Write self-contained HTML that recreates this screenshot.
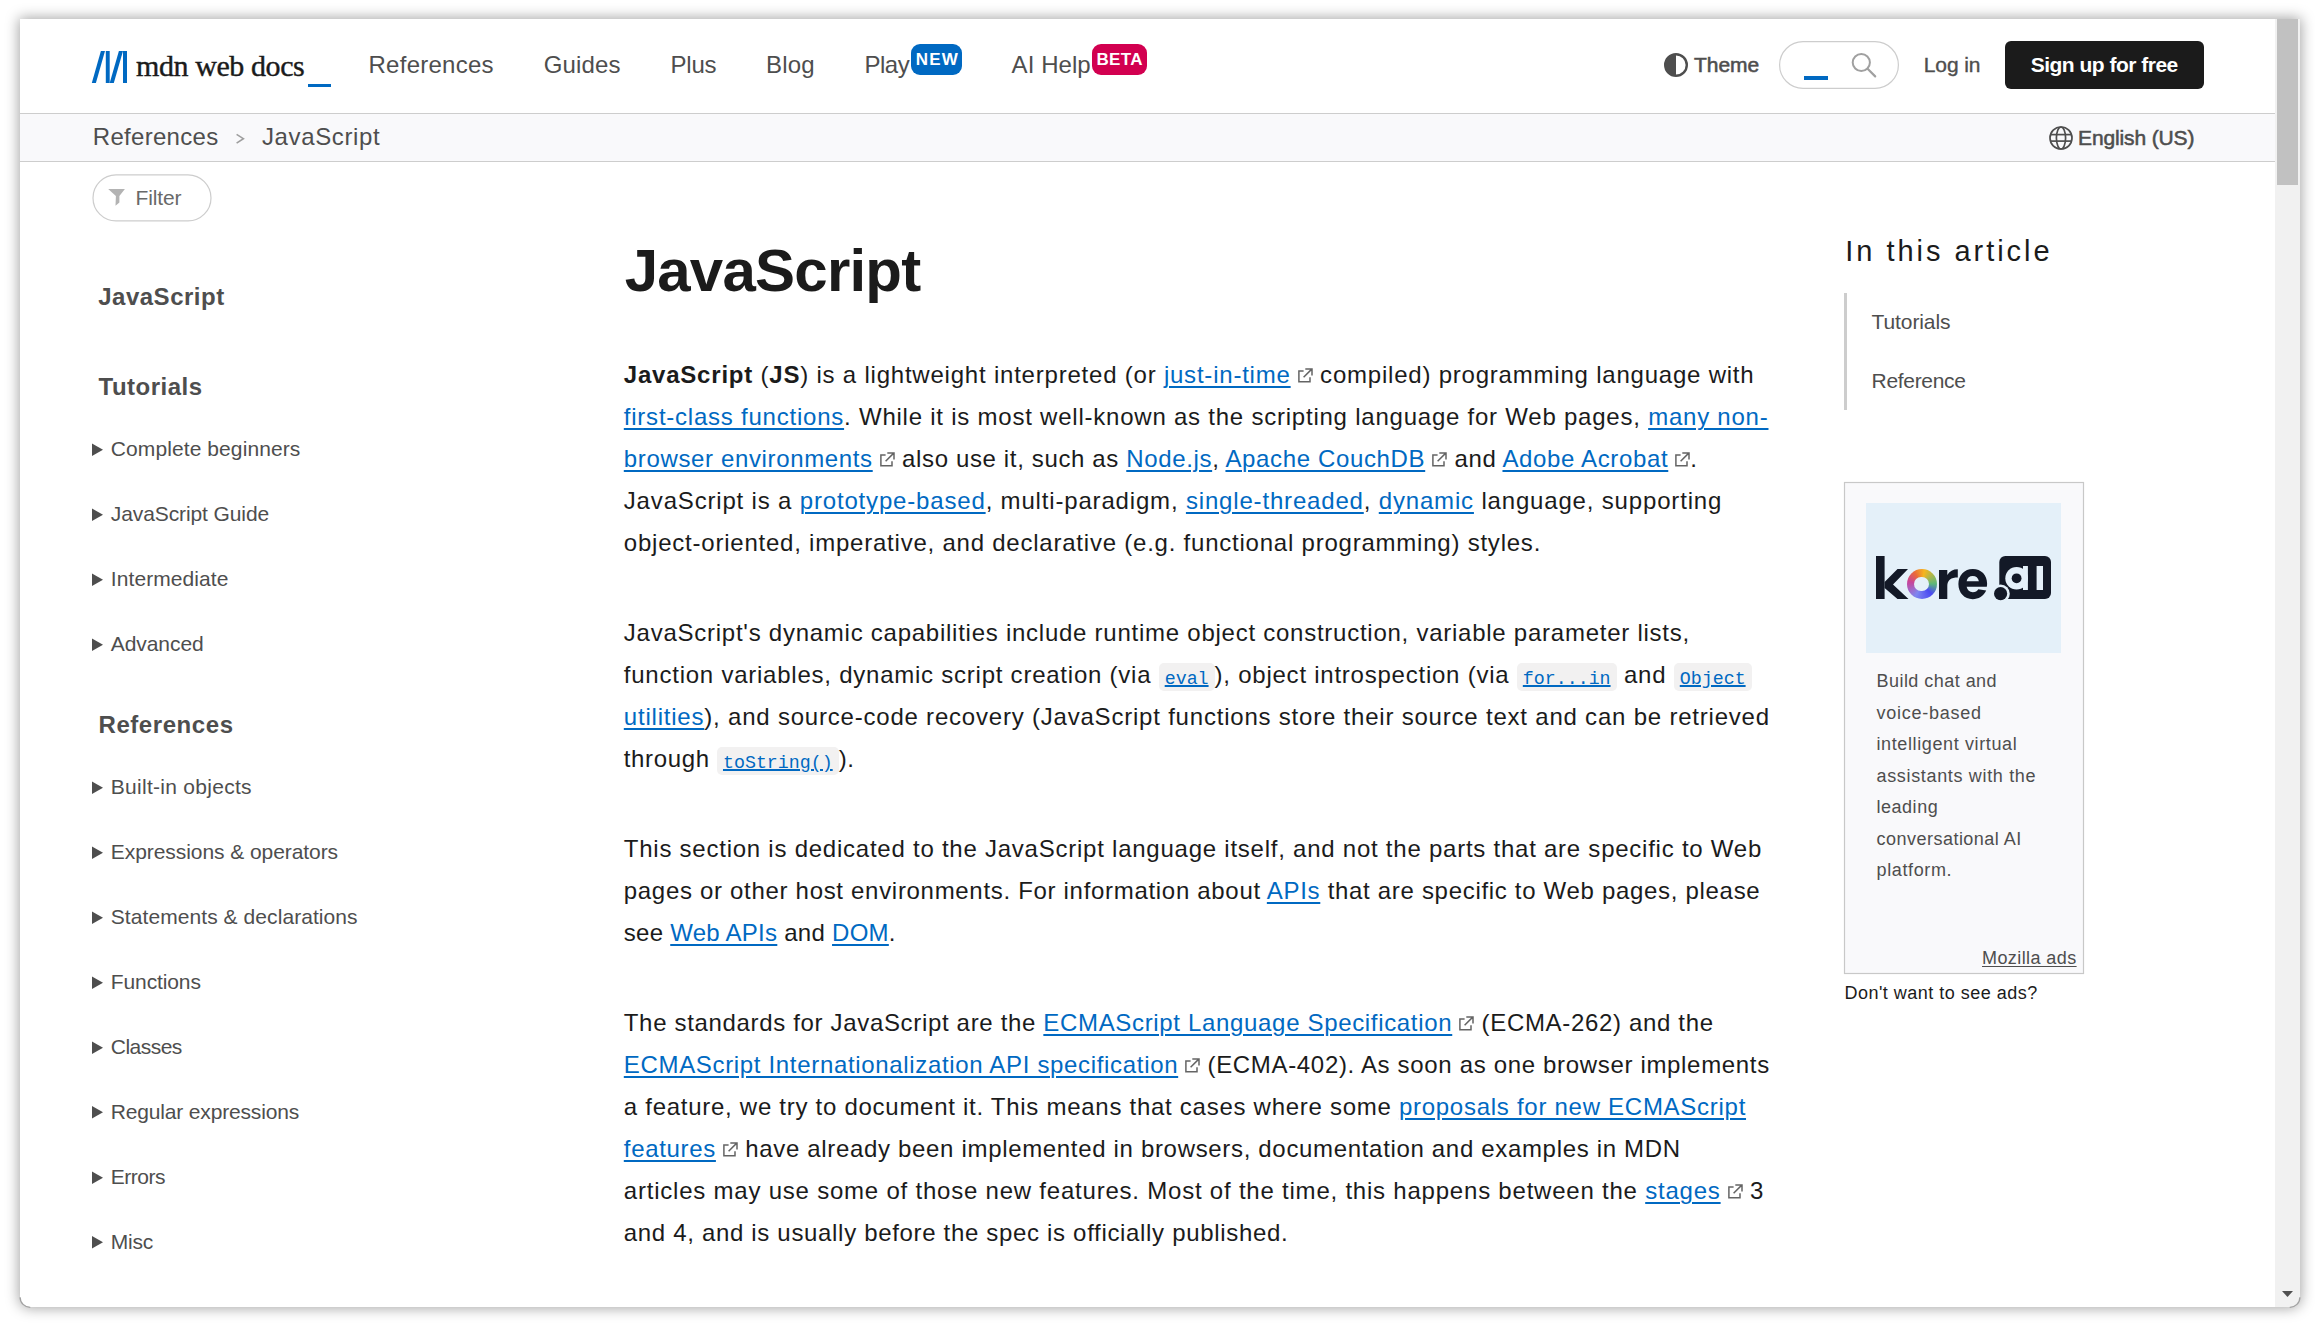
<!DOCTYPE html>
<html><head><meta charset="utf-8"><style>
html,body{margin:0;padding:0;background:#fff;width:2315px;height:1324px;overflow:hidden;position:relative}
.win{position:absolute;left:20px;top:19px;width:2280px;height:1288px;background:#fff;border-radius:0 0 10px 10px;box-shadow:0 0 14px 1px rgba(0,0,0,.37)}
.abs{position:absolute}
.t{position:absolute;white-space:nowrap;font-family:"Liberation Sans",sans-serif}
.t a{color:#0069c2;text-decoration:underline;text-decoration-thickness:1.5px;text-underline-offset:2.5px}
.t b{font-weight:700}
.t u{text-decoration-thickness:1px;text-underline-offset:2px}
.t code{font-family:"Liberation Mono",monospace;font-size:18.3px;letter-spacing:0;background:#f2f1f1;border-radius:5px;padding:5.5px 6px 2.5px}
.t code a{letter-spacing:0;text-underline-offset:2px}
.t svg.ext{display:inline-block;width:16px;height:16px;margin-left:6px;vertical-align:baseline}
svg.ov{position:absolute;left:0;top:0}

</style></head><body>
<div class="win"></div>
<div class="abs" style="left:20px;top:113px;width:2255px;height:1px;background:#cdcdcd"></div>
<div class="abs" style="left:20px;top:114px;width:2255px;height:47px;background:#f9f9fb"></div>
<div class="abs" style="left:20px;top:161px;width:2255px;height:1px;background:#cdcdcd"></div>
<!-- scrollbar -->
<div class="abs" style="left:2275px;top:19px;width:25px;height:1288px;background:#f1f1f1;border-radius:0 0 10px 0"></div>
<div class="abs" style="left:2277px;top:19px;width:21px;height:166px;background:#c1c1c1"></div>
<svg class="ov" width="2315" height="1324">
 <!-- mdn logo -->
 <g fill="#0069c2">
  <polygon points="91.8,83 95.9,83 105,51 100.9,51"/>
  <rect x="105.8" y="51" width="3.9" height="32"/>
  <polygon points="109.7,83 113.8,83 123,51 118.9,51"/>
  <rect x="123" y="51" width="4" height="32"/>
  <rect x="308" y="84" width="23" height="3"/>
 </g>
 <!-- badges -->
 <rect x="911" y="44" width="51" height="31" rx="9" fill="#0069c2"/>
 <rect x="1092" y="44" width="55" height="31" rx="9" fill="#d20050"/>
 <!-- theme icon -->
 <circle cx="1676" cy="65" r="10.8" fill="none" stroke="#4e4e4e" stroke-width="2.4"/>
 <path d="M1676 54.2A10.8 10.8 0 0 0 1676 75.8Z" fill="#4e4e4e"/>
 <!-- search -->
 <rect x="1779.6" y="41.6" width="118.8" height="46.8" rx="23.4" fill="none" stroke="#cdcdcd" stroke-width="1.2"/>
 <rect x="1804" y="76" width="24" height="4" fill="#0069c2"/>
 <circle cx="1861.3" cy="62.5" r="8.6" fill="none" stroke="#a0a0a0" stroke-width="2"/>
 <line x1="1867.6" y1="68.8" x2="1875.2" y2="76.4" stroke="#a0a0a0" stroke-width="2.2" stroke-linecap="round"/>
 <!-- signup button -->
 <rect x="2005" y="41" width="199" height="48" rx="6" fill="#1b1b1b"/>
 <!-- breadcrumb chevron -->
 <polyline points="236.6,134.3 243.4,138.7 236.6,143.1" fill="none" stroke="#9e9e9e" stroke-width="1.6"/>
 <!-- globe -->
 <g fill="none" stroke="#4e4e4e" stroke-width="1.7">
  <circle cx="2061" cy="138" r="11"/>
  <ellipse cx="2061" cy="138" rx="4.6" ry="11"/>
  <line x1="2050.5" y1="134.6" x2="2071.5" y2="134.6"/>
  <line x1="2050.5" y1="141.1" x2="2071.5" y2="141.1"/>
 </g>
 <!-- filter -->
 <rect x="93" y="174.9" width="118" height="46" rx="23" fill="none" stroke="#cdcdcd" stroke-width="1.2"/>
 <polygon points="108.2,189.1 124.9,189.1 119.4,196.1 119.4,202.5 115.5,205.7 115.9,196.1" fill="#b3b3b3"/>
 <!-- sidebar triangles -->
 <g fill="#4e4e4e">
  <polygon points="92,443.4 103,449.7 92,456"/>
  <polygon points="92,508.4 103,514.7 92,521"/>
  <polygon points="92,573.4 103,579.7 92,586"/>
  <polygon points="92,638.4 103,644.7 92,651"/>
  <polygon points="92,781.4 103,787.7 92,794"/>
  <polygon points="92,846.4 103,852.7 92,859"/>
  <polygon points="92,911.4 103,917.7 92,924"/>
  <polygon points="92,976.4 103,982.7 92,989"/>
  <polygon points="92,1041.4 103,1047.7 92,1054"/>
  <polygon points="92,1105.9 103,1112.2 92,1118.5"/>
  <polygon points="92,1171.4 103,1177.7 92,1184"/>
  <polygon points="92,1235.9 103,1242.2 92,1248.5"/>
 </g>
 <!-- toc bar -->
 <rect x="1844" y="293" width="3" height="117" fill="#cdcdcd"/>
 <!-- ad -->
 <rect x="1844.5" y="482.5" width="239" height="491" fill="#f9f9fb" stroke="#c8c8c8" stroke-width="1.2"/>
 <rect x="1866" y="503" width="195" height="150" fill="#e4f0f9"/>
 <g fill="#131927">
  <rect x="1876" y="556" width="8.6" height="43"/>
  <polygon points="1884.6,582 1897.5,569 1908,569 1893,584.5 1908.5,599 1897.5,599 1884.6,588"/>
  <path d="M1939 599V570H1947.3V575C1949.5 571 1953 569.2 1957.8 569.2V577.5C1951 577.5 1947.3 580 1947.3 586V599Z"/>
  <rect x="1999.3" y="556" width="51.7" height="43" rx="6"/>
 </g>
 <circle cx="2000.6" cy="593.7" r="9.2" fill="#e4f0f9"/>
 <circle cx="2000.6" cy="593.7" r="6.6" fill="#131927"/>
 <g fill="#e4f0f9">
  <circle cx="2016.6" cy="578.3" r="11.3"/>
  <rect x="2023" y="566" width="4.9" height="24"/>
  <rect x="2036.6" y="566" width="6.4" height="24"/>
 </g>
 <circle cx="2016.6" cy="578.3" r="4.9" fill="#131927"/>
 <!-- e -->
 <path d="M1986.2 590.5C1983.5 596 1978.5 599.2 1972.7 599.2C1964.3 599.2 1958.4 592.9 1958.4 584.1C1958.4 575.3 1964.4 569 1972.8 569C1981.3 569 1987.1 575.1 1987.1 583.6C1987.1 584.8 1987 585.8 1986.8 586.8H1966.6C1967.4 590.3 1969.6 592.2 1972.8 592.2C1975.4 592.2 1977.2 591.2 1978.3 589.2ZM1978.9 581.3C1978.2 577.9 1976 576 1972.7 576C1969.5 576 1967.3 577.9 1966.6 581.3Z" fill="#131927"/>
 <!-- window corner arcs -->
 <path d="M20.1 1297.2A10 10 0 0 0 30.3 1307.3" fill="none" stroke="#a2a2a2" stroke-width="1.3"/>
 <path d="M2299.9 1297.2A10 10 0 0 1 2289.7 1307.3" fill="none" stroke="#a2a2a2" stroke-width="1.3"/>
 <!-- scrollbar arrow -->
 <polygon points="2282,1291 2293,1291 2287.5,1297" fill="#505050"/>
</svg>
<!-- kore ring -->
<div class="abs" style="left:1906.5px;top:569px;width:30px;height:30px;border-radius:50%;background:conic-gradient(from 10deg,#f6b51e,#5cb87a 22%,#4a4af2 35%,#7f86f0 55%,#c8449a 75%,#ea6a3a 88%,#f6b51e)"></div>
<div class="abs" style="left:1914.2px;top:576.7px;width:14.6px;height:14.6px;border-radius:50%;background:#e4f0f9"></div>

<div class="t" id="t0" style="left:368.5px;top:53.0px;font-size:24px;line-height:24px;font-weight:400;color:#4e4e4e;font-family:'Liberation Sans', sans-serif;letter-spacing:0.263px;">References</div>
<div class="t" id="t1" style="left:543.8px;top:53.0px;font-size:24px;line-height:24px;font-weight:400;color:#4e4e4e;font-family:'Liberation Sans', sans-serif;letter-spacing:0.149px;">Guides</div>
<div class="t" id="t2" style="left:670.5px;top:53.0px;font-size:24px;line-height:24px;font-weight:400;color:#4e4e4e;font-family:'Liberation Sans', sans-serif;letter-spacing:-0.197px;">Plus</div>
<div class="t" id="t3" style="left:766.0px;top:53.0px;font-size:24px;line-height:24px;font-weight:400;color:#4e4e4e;font-family:'Liberation Sans', sans-serif;letter-spacing:0.187px;">Blog</div>
<div class="t" id="t4" style="left:864.4px;top:53.0px;font-size:24px;line-height:24px;font-weight:400;color:#4e4e4e;font-family:'Liberation Sans', sans-serif;letter-spacing:-0.461px;">Play</div>
<div class="t" id="t5" style="left:1011.6px;top:53.0px;font-size:24px;line-height:24px;font-weight:400;color:#4e4e4e;font-family:'Liberation Sans', sans-serif;letter-spacing:0.065px;">AI Help</div>
<div class="t" id="t6" style="left:915.7px;top:51.0px;font-size:17px;line-height:17px;font-weight:700;color:#fff;font-family:'Liberation Sans', sans-serif;letter-spacing:1.218px;">NEW</div>
<div class="t" id="t7" style="left:1096.5px;top:51.0px;font-size:17px;line-height:17px;font-weight:700;color:#fff;font-family:'Liberation Sans', sans-serif;letter-spacing:0.328px;">BETA</div>
<div class="t" id="t8" style="left:1694.0px;top:54.0px;font-size:21px;line-height:21px;font-weight:400;color:#4e4e4e;font-family:'Liberation Sans', sans-serif;letter-spacing:-0.043px;-webkit-text-stroke:0.55px #4e4e4e;">Theme</div>
<div class="t" id="t9" style="left:1923.8px;top:54.0px;font-size:21px;line-height:21px;font-weight:400;color:#4e4e4e;font-family:'Liberation Sans', sans-serif;letter-spacing:-0.125px;-webkit-text-stroke:0.35px #4e4e4e;">Log in</div>
<div class="t" id="t10" style="left:2030.7px;top:54.0px;font-size:21px;line-height:21px;font-weight:700;color:#fff;font-family:'Liberation Sans', sans-serif;letter-spacing:-0.504px;">Sign up for free</div>
<div class="t" id="t11" style="left:136.0px;top:51.0px;font-size:30px;line-height:30px;font-weight:400;color:#1b1b1b;font-family:'Liberation Serif', serif;letter-spacing:-0.419px;-webkit-text-stroke:0.4px #1b1b1b;">mdn web docs</div>
<div class="t" id="t12" style="left:92.8px;top:125.0px;font-size:24px;line-height:24px;font-weight:400;color:#4e4e4e;font-family:'Liberation Sans', sans-serif;letter-spacing:0.296px;">References</div>
<div class="t" id="t13" style="left:262.0px;top:125.0px;font-size:24px;line-height:24px;font-weight:400;color:#4e4e4e;font-family:'Liberation Sans', sans-serif;letter-spacing:0.617px;">JavaScript</div>
<div class="t" id="t14" style="left:2078.0px;top:126.5px;font-size:21px;line-height:21px;font-weight:400;color:#4e4e4e;font-family:'Liberation Sans', sans-serif;letter-spacing:-0.125px;-webkit-text-stroke:0.55px #4e4e4e;">English (US)</div>
<div class="t" id="t15" style="left:135.6px;top:187.0px;font-size:21px;line-height:21px;font-weight:400;color:#696969;font-family:'Liberation Sans', sans-serif;letter-spacing:-0.173px;">Filter</div>
<div class="t" id="t16" style="left:98.2px;top:285.0px;font-size:24px;line-height:24px;font-weight:700;color:#4e4e4e;font-family:'Liberation Sans', sans-serif;letter-spacing:0.510px;">JavaScript</div>
<div class="t" id="t17" style="left:98.6px;top:375.0px;font-size:24px;line-height:24px;font-weight:700;color:#4e4e4e;font-family:'Liberation Sans', sans-serif;letter-spacing:0.479px;">Tutorials</div>
<div class="t" id="t18" style="left:98.5px;top:713.0px;font-size:24px;line-height:24px;font-weight:700;color:#4e4e4e;font-family:'Liberation Sans', sans-serif;letter-spacing:0.565px;">References</div>
<div class="t" id="t19" style="left:110.8px;top:438.0px;font-size:21px;line-height:21px;font-weight:400;color:#4e4e4e;font-family:'Liberation Sans', sans-serif;letter-spacing:0.091px;">Complete beginners</div>
<div class="t" id="t20" style="left:110.8px;top:503.0px;font-size:21px;line-height:21px;font-weight:400;color:#4e4e4e;font-family:'Liberation Sans', sans-serif;letter-spacing:-0.101px;">JavaScript Guide</div>
<div class="t" id="t21" style="left:110.8px;top:568.0px;font-size:21px;line-height:21px;font-weight:400;color:#4e4e4e;font-family:'Liberation Sans', sans-serif;letter-spacing:0.079px;">Intermediate</div>
<div class="t" id="t22" style="left:110.8px;top:633.0px;font-size:21px;line-height:21px;font-weight:400;color:#4e4e4e;font-family:'Liberation Sans', sans-serif;letter-spacing:-0.073px;">Advanced</div>
<div class="t" id="t23" style="left:110.8px;top:776.0px;font-size:21px;line-height:21px;font-weight:400;color:#4e4e4e;font-family:'Liberation Sans', sans-serif;letter-spacing:0.283px;">Built-in objects</div>
<div class="t" id="t24" style="left:110.8px;top:841.0px;font-size:21px;line-height:21px;font-weight:400;color:#4e4e4e;font-family:'Liberation Sans', sans-serif;letter-spacing:-0.067px;">Expressions &amp; operators</div>
<div class="t" id="t25" style="left:110.8px;top:906.0px;font-size:21px;line-height:21px;font-weight:400;color:#4e4e4e;font-family:'Liberation Sans', sans-serif;letter-spacing:0.069px;">Statements &amp; declarations</div>
<div class="t" id="t26" style="left:110.8px;top:971.0px;font-size:21px;line-height:21px;font-weight:400;color:#4e4e4e;font-family:'Liberation Sans', sans-serif;letter-spacing:-0.118px;">Functions</div>
<div class="t" id="t27" style="left:110.8px;top:1036.0px;font-size:21px;line-height:21px;font-weight:400;color:#4e4e4e;font-family:'Liberation Sans', sans-serif;letter-spacing:-0.533px;">Classes</div>
<div class="t" id="t28" style="left:110.8px;top:1100.5px;font-size:21px;line-height:21px;font-weight:400;color:#4e4e4e;font-family:'Liberation Sans', sans-serif;letter-spacing:-0.169px;">Regular expressions</div>
<div class="t" id="t29" style="left:110.8px;top:1166.0px;font-size:21px;line-height:21px;font-weight:400;color:#4e4e4e;font-family:'Liberation Sans', sans-serif;letter-spacing:-0.494px;">Errors</div>
<div class="t" id="t30" style="left:110.8px;top:1230.5px;font-size:21px;line-height:21px;font-weight:400;color:#4e4e4e;font-family:'Liberation Sans', sans-serif;letter-spacing:-0.224px;">Misc</div>
<div class="t" id="t31" style="left:624.7px;top:241.0px;font-size:60px;line-height:60px;font-weight:700;color:#1b1b1b;font-family:'Liberation Sans', sans-serif;letter-spacing:-0.778px;">JavaScript</div>
<div class="t" id="t32" style="left:1845.3px;top:237.0px;font-size:29px;line-height:29px;font-weight:400;color:#1b1b1b;font-family:'Liberation Sans', sans-serif;letter-spacing:2.965px;">In this article</div>
<div class="t" id="t33" style="left:1871.6px;top:311.0px;font-size:21px;line-height:21px;font-weight:400;color:#4e4e4e;font-family:'Liberation Sans', sans-serif;letter-spacing:-0.107px;">Tutorials</div>
<div class="t" id="t34" style="left:1871.6px;top:370.0px;font-size:21px;line-height:21px;font-weight:400;color:#4e4e4e;font-family:'Liberation Sans', sans-serif;letter-spacing:-0.323px;">Reference</div>
<div class="t" id="t35" style="left:1876.5px;top:672.2px;font-size:18px;line-height:18px;font-weight:400;color:#4e4e4e;font-family:'Liberation Sans', sans-serif;letter-spacing:0.462px;">Build chat and</div>
<div class="t" id="t36" style="left:1876.5px;top:703.8px;font-size:18px;line-height:18px;font-weight:400;color:#4e4e4e;font-family:'Liberation Sans', sans-serif;letter-spacing:0.744px;">voice-based</div>
<div class="t" id="t37" style="left:1876.5px;top:735.1px;font-size:18px;line-height:18px;font-weight:400;color:#4e4e4e;font-family:'Liberation Sans', sans-serif;letter-spacing:0.618px;">intelligent virtual</div>
<div class="t" id="t38" style="left:1876.5px;top:766.5px;font-size:18px;line-height:18px;font-weight:400;color:#4e4e4e;font-family:'Liberation Sans', sans-serif;letter-spacing:0.662px;">assistants with the</div>
<div class="t" id="t39" style="left:1876.5px;top:797.6px;font-size:18px;line-height:18px;font-weight:400;color:#4e4e4e;font-family:'Liberation Sans', sans-serif;letter-spacing:0.522px;">leading</div>
<div class="t" id="t40" style="left:1876.5px;top:829.8px;font-size:18px;line-height:18px;font-weight:400;color:#4e4e4e;font-family:'Liberation Sans', sans-serif;letter-spacing:0.482px;">conversational AI</div>
<div class="t" id="t41" style="left:1876.5px;top:861.1px;font-size:18px;line-height:18px;font-weight:400;color:#4e4e4e;font-family:'Liberation Sans', sans-serif;letter-spacing:0.633px;">platform.</div>
<div class="t" id="t42" style="left:1982.0px;top:949.0px;font-size:18px;line-height:18px;font-weight:400;color:#4e4e4e;font-family:'Liberation Sans', sans-serif;letter-spacing:0.415px;"><u>Mozilla ads</u></div>
<div class="t" id="t43" style="left:1844.4px;top:983.6px;font-size:18px;line-height:18px;font-weight:400;color:#1b1b1b;font-family:'Liberation Sans', sans-serif;letter-spacing:0.497px;">Don't want to see ads?</div>
<div class="t" id="t44" style="left:623.8px;top:363.0px;font-size:24px;line-height:24px;font-weight:400;color:#1b1b1b;font-family:'Liberation Sans', sans-serif;letter-spacing:0.785px;"><b>JavaScript</b> (<b>JS</b>) is a lightweight interpreted (or <a>just-in-time</a><svg class="ext" viewBox="0 0 16 16"><path d="M6.6 3.9H1.9V14.8H13V10.3M6.6 10.3L15 1.9M8.3 1.9H15V8.6" fill="none" stroke="#646464" stroke-width="1.5"/></svg> compiled) programming language with</div>
<div class="t" id="t45" style="left:623.8px;top:405.0px;font-size:24px;line-height:24px;font-weight:400;color:#1b1b1b;font-family:'Liberation Sans', sans-serif;letter-spacing:0.772px;"><a>first-class functions</a>. While it is most well-known as the scripting language for Web pages, <a>many non-</a></div>
<div class="t" id="t46" style="left:623.8px;top:447.0px;font-size:24px;line-height:24px;font-weight:400;color:#1b1b1b;font-family:'Liberation Sans', sans-serif;letter-spacing:0.641px;"><a>browser environments</a><svg class="ext" viewBox="0 0 16 16"><path d="M6.6 3.9H1.9V14.8H13V10.3M6.6 10.3L15 1.9M8.3 1.9H15V8.6" fill="none" stroke="#646464" stroke-width="1.5"/></svg> also use it, such as <a>Node.js</a>, <a>Apache CouchDB</a><svg class="ext" viewBox="0 0 16 16"><path d="M6.6 3.9H1.9V14.8H13V10.3M6.6 10.3L15 1.9M8.3 1.9H15V8.6" fill="none" stroke="#646464" stroke-width="1.5"/></svg> and <a>Adobe Acrobat</a><svg class="ext" viewBox="0 0 16 16"><path d="M6.6 3.9H1.9V14.8H13V10.3M6.6 10.3L15 1.9M8.3 1.9H15V8.6" fill="none" stroke="#646464" stroke-width="1.5"/></svg>.</div>
<div class="t" id="t47" style="left:623.8px;top:489.0px;font-size:24px;line-height:24px;font-weight:400;color:#1b1b1b;font-family:'Liberation Sans', sans-serif;letter-spacing:0.827px;">JavaScript is a <a>prototype-based</a>, multi-paradigm, <a>single-threaded</a>, <a>dynamic</a> language, supporting</div>
<div class="t" id="t48" style="left:623.8px;top:531.0px;font-size:24px;line-height:24px;font-weight:400;color:#1b1b1b;font-family:'Liberation Sans', sans-serif;letter-spacing:0.775px;">object-oriented, imperative, and declarative (e.g. functional programming) styles.</div>
<div class="t" id="t49" style="left:623.8px;top:621.0px;font-size:24px;line-height:24px;font-weight:400;color:#1b1b1b;font-family:'Liberation Sans', sans-serif;letter-spacing:0.747px;">JavaScript's dynamic capabilities include runtime object construction, variable parameter lists,</div>
<div class="t" id="t50" style="left:623.8px;top:663.0px;font-size:24px;line-height:24px;font-weight:400;color:#1b1b1b;font-family:'Liberation Sans', sans-serif;letter-spacing:0.762px;">function variables, dynamic script creation (via <code><a>eval</a></code>), object introspection (via <code><a>for...in</a></code> and <code><a>Object</a></code></div>
<div class="t" id="t51" style="left:623.8px;top:705.0px;font-size:24px;line-height:24px;font-weight:400;color:#1b1b1b;font-family:'Liberation Sans', sans-serif;letter-spacing:0.792px;"><a>utilities</a>), and source-code recovery (JavaScript functions store their source text and can be retrieved</div>
<div class="t" id="t52" style="left:623.8px;top:747.0px;font-size:24px;line-height:24px;font-weight:400;color:#1b1b1b;font-family:'Liberation Sans', sans-serif;letter-spacing:0.637px;">through <code><a>toString()</a></code>).</div>
<div class="t" id="t53" style="left:623.8px;top:837.0px;font-size:24px;line-height:24px;font-weight:400;color:#1b1b1b;font-family:'Liberation Sans', sans-serif;letter-spacing:0.758px;">This section is dedicated to the JavaScript language itself, and not the parts that are specific to Web</div>
<div class="t" id="t54" style="left:623.8px;top:879.0px;font-size:24px;line-height:24px;font-weight:400;color:#1b1b1b;font-family:'Liberation Sans', sans-serif;letter-spacing:0.691px;">pages or other host environments. For information about <a>APIs</a> that are specific to Web pages, please</div>
<div class="t" id="t55" style="left:623.8px;top:921.0px;font-size:24px;line-height:24px;font-weight:400;color:#1b1b1b;font-family:'Liberation Sans', sans-serif;letter-spacing:0.266px;">see <a>Web APIs</a> and <a>DOM</a>.</div>
<div class="t" id="t56" style="left:623.8px;top:1011.0px;font-size:24px;line-height:24px;font-weight:400;color:#1b1b1b;font-family:'Liberation Sans', sans-serif;letter-spacing:0.667px;">The standards for JavaScript are the <a>ECMAScript Language Specification</a><svg class="ext" viewBox="0 0 16 16"><path d="M6.6 3.9H1.9V14.8H13V10.3M6.6 10.3L15 1.9M8.3 1.9H15V8.6" fill="none" stroke="#646464" stroke-width="1.5"/></svg> (ECMA-262) and the</div>
<div class="t" id="t57" style="left:623.8px;top:1053.0px;font-size:24px;line-height:24px;font-weight:400;color:#1b1b1b;font-family:'Liberation Sans', sans-serif;letter-spacing:0.669px;"><a>ECMAScript Internationalization API specification</a><svg class="ext" viewBox="0 0 16 16"><path d="M6.6 3.9H1.9V14.8H13V10.3M6.6 10.3L15 1.9M8.3 1.9H15V8.6" fill="none" stroke="#646464" stroke-width="1.5"/></svg> (ECMA-402). As soon as one browser implements</div>
<div class="t" id="t58" style="left:623.8px;top:1095.0px;font-size:24px;line-height:24px;font-weight:400;color:#1b1b1b;font-family:'Liberation Sans', sans-serif;letter-spacing:0.725px;">a feature, we try to document it. This means that cases where some <a>proposals for new ECMAScript</a></div>
<div class="t" id="t59" style="left:623.8px;top:1137.0px;font-size:24px;line-height:24px;font-weight:400;color:#1b1b1b;font-family:'Liberation Sans', sans-serif;letter-spacing:0.671px;"><a>features</a><svg class="ext" viewBox="0 0 16 16"><path d="M6.6 3.9H1.9V14.8H13V10.3M6.6 10.3L15 1.9M8.3 1.9H15V8.6" fill="none" stroke="#646464" stroke-width="1.5"/></svg> have already been implemented in browsers, documentation and examples in MDN</div>
<div class="t" id="t60" style="left:623.8px;top:1179.0px;font-size:24px;line-height:24px;font-weight:400;color:#1b1b1b;font-family:'Liberation Sans', sans-serif;letter-spacing:0.783px;">articles may use some of those new features. Most of the time, this happens between the <a>stages</a><svg class="ext" viewBox="0 0 16 16"><path d="M6.6 3.9H1.9V14.8H13V10.3M6.6 10.3L15 1.9M8.3 1.9H15V8.6" fill="none" stroke="#646464" stroke-width="1.5"/></svg> 3</div>
<div class="t" id="t61" style="left:623.8px;top:1221.0px;font-size:24px;line-height:24px;font-weight:400;color:#1b1b1b;font-family:'Liberation Sans', sans-serif;letter-spacing:0.676px;">and 4, and is usually before the spec is officially published.</div>
</body></html>
